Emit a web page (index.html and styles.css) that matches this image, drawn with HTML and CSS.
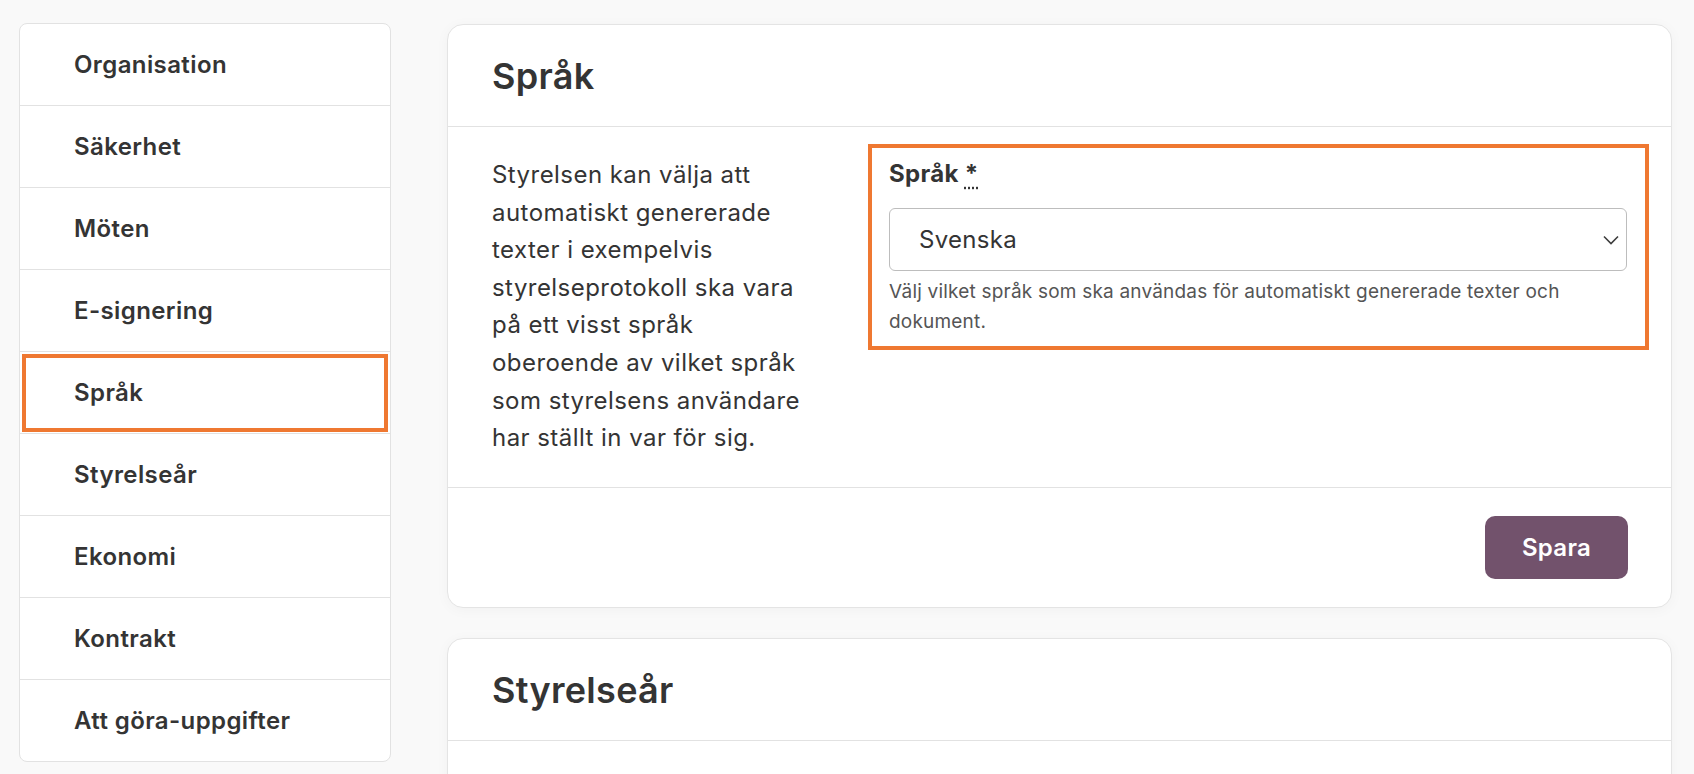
FILE: index.html
```html
<!DOCTYPE html>
<html lang="sv">
<head>
<meta charset="utf-8">
<title>Inställningar</title>
<link rel="stylesheet" href="styles.css">
</head>
<body>
<div class="page">
  <nav class="sidebar">
    <a class="nav-item" href="#">Organisation</a>
    <a class="nav-item" href="#">Säkerhet</a>
    <a class="nav-item" href="#">Möten</a>
    <a class="nav-item" href="#">E-signering</a>
    <a class="nav-item is-highlighted" href="#">Språk</a>
    <a class="nav-item" href="#">Styrelseår</a>
    <a class="nav-item" href="#">Ekonomi</a>
    <a class="nav-item" href="#">Kontrakt</a>
    <a class="nav-item" href="#">Att göra-uppgifter</a>
  </nav>
  <main class="content">
    <section class="card">
      <header class="card-header"><h2 class="card-title">Språk</h2></header>
      <div class="card-body">
        <p class="description">Styrelsen kan välja att automatiskt genererade texter i exempelvis styrelseprotokoll ska vara på ett visst språk oberoende av vilket språk som styrelsens användare har ställt in var för sig.</p>
        <div class="form-group is-highlighted">
          <label class="form-label">Språk <abbr class="required" title="obligatoriskt">*</abbr></label>
          <div class="select">
            <span class="select-value">Svenska</span>
            <svg class="chevron" width="16" height="10" viewBox="0 0 16 10"><polyline points="1,1.5 8,8.5 15,1.5" fill="none" stroke="#3d3d3d" stroke-width="1.6"/></svg>
          </div>
          <p class="help">Välj vilket språk som ska användas för automatiskt genererade texter och dokument.</p>
        </div>
      </div>
      <footer class="card-footer"><button class="btn-primary" type="button">Spara</button></footer>
    </section>
    <section class="card">
      <header class="card-header"><h2 class="card-title">Styrelseår</h2></header>
      <div class="card-body card-body-empty"></div>
    </section>
  </main>
</div>
</body>
</html>
```
FILE: styles.css
```css
* { box-sizing: border-box; }
html, body { margin: 0; padding: 0; }
body {
  background: #f9f9f9;
  font-family: Inter, "Noto Sans", sans-serif;
  color: #343434;
  overflow: hidden;
}
.page {
  display: flex;
  align-items: flex-start;
  gap: 56px;
  padding: 23px 22px 0 19px;
}
.sidebar {
  flex: 0 0 372px;
  display: flex;
  flex-direction: column;
  background: #fff;
  border: 1px solid #e2e2e2;
  border-radius: 8px;
}
.nav-item {
  display: flex;
  align-items: center;
  height: 82px;
  padding-left: 54px;
  border-bottom: 1px solid #e2e2e2;
  color: #343434;
  text-decoration: none;
  font-size: 24px;
  font-weight: 600;
  letter-spacing: 0.4px;
}
.nav-item:last-child { border-bottom: none; height: 81px; }
.nav-item.is-highlighted {
  outline: 4px solid #ef7831;
  outline-offset: -6px;
}
.content {
  flex: 1;
  display: flex;
  flex-direction: column;
  gap: 30px;
  margin-top: 1px;
}
.card {
  background: #fff;
  border: 1px solid #e4e4e4;
  border-radius: 16px;
  box-shadow: 0 2px 14px rgba(0, 0, 0, 0.035);
}
.card-header {
  padding: 30px 44px 28px;
  border-bottom: 1px solid #e2e2e2;
}
.card-title {
  margin: 0;
  font-size: 36px;
  line-height: 43px;
  font-weight: 600;
  letter-spacing: 0.3px;
  color: #343434;
}
.card-body {
  display: grid;
  grid-template-columns: 330px 1fr;
  column-gap: 67px;
  padding: 29px 44px 30px;
  border-bottom: 1px solid #e2e2e2;
}
.card-body-empty { min-height: 200px; border-bottom: none; }
.description {
  margin: 0;
  font-size: 24px;
  line-height: 37.6px;
  letter-spacing: 0.45px;
  color: #343434;
}
.form-group {
  position: relative;
  margin-top: 3px;
  align-self: start;
}
.form-group.is-highlighted::after {
  content: "";
  position: absolute;
  top: -15px;
  bottom: -13px;
  left: -21px;
  right: -22px;
  border: 4px solid #ef7831;
  pointer-events: none;
}
.form-label {
  display: block;
  font-size: 24px;
  line-height: 30px;
  font-weight: 700;
  letter-spacing: 0.3px;
  color: #343434;
}
.required {
  text-decoration: underline dotted;
  text-underline-offset: 5px;
  font-weight: 700;
}
.select {
  display: flex;
  align-items: center;
  justify-content: space-between;
  height: 63px;
  margin-top: 19px;
  padding: 0 7px 0 29px;
  border: 1px solid #bdbdbd;
  border-radius: 6px;
  background: #fff;
}
.select-value {
  font-size: 24px;
  letter-spacing: 0.3px;
  color: #343434;
}
.chevron { display: block; }
.help {
  margin: 6px 0 0;
  font-size: 19px;
  line-height: 30px;
  letter-spacing: 0.2px;
  color: #555;
}
.card-footer {
  display: flex;
  justify-content: flex-end;
  padding: 28px 43px 28px;
}
.btn-primary {
  height: 63px;
  width: 143px;
  border: none;
  border-radius: 10px;
  background: #72526c;
  color: #fff;
  font-family: Inter, "Noto Sans", sans-serif;
  font-size: 24px;
  font-weight: 600;
  letter-spacing: 0.3px;
  cursor: pointer;
}
```
